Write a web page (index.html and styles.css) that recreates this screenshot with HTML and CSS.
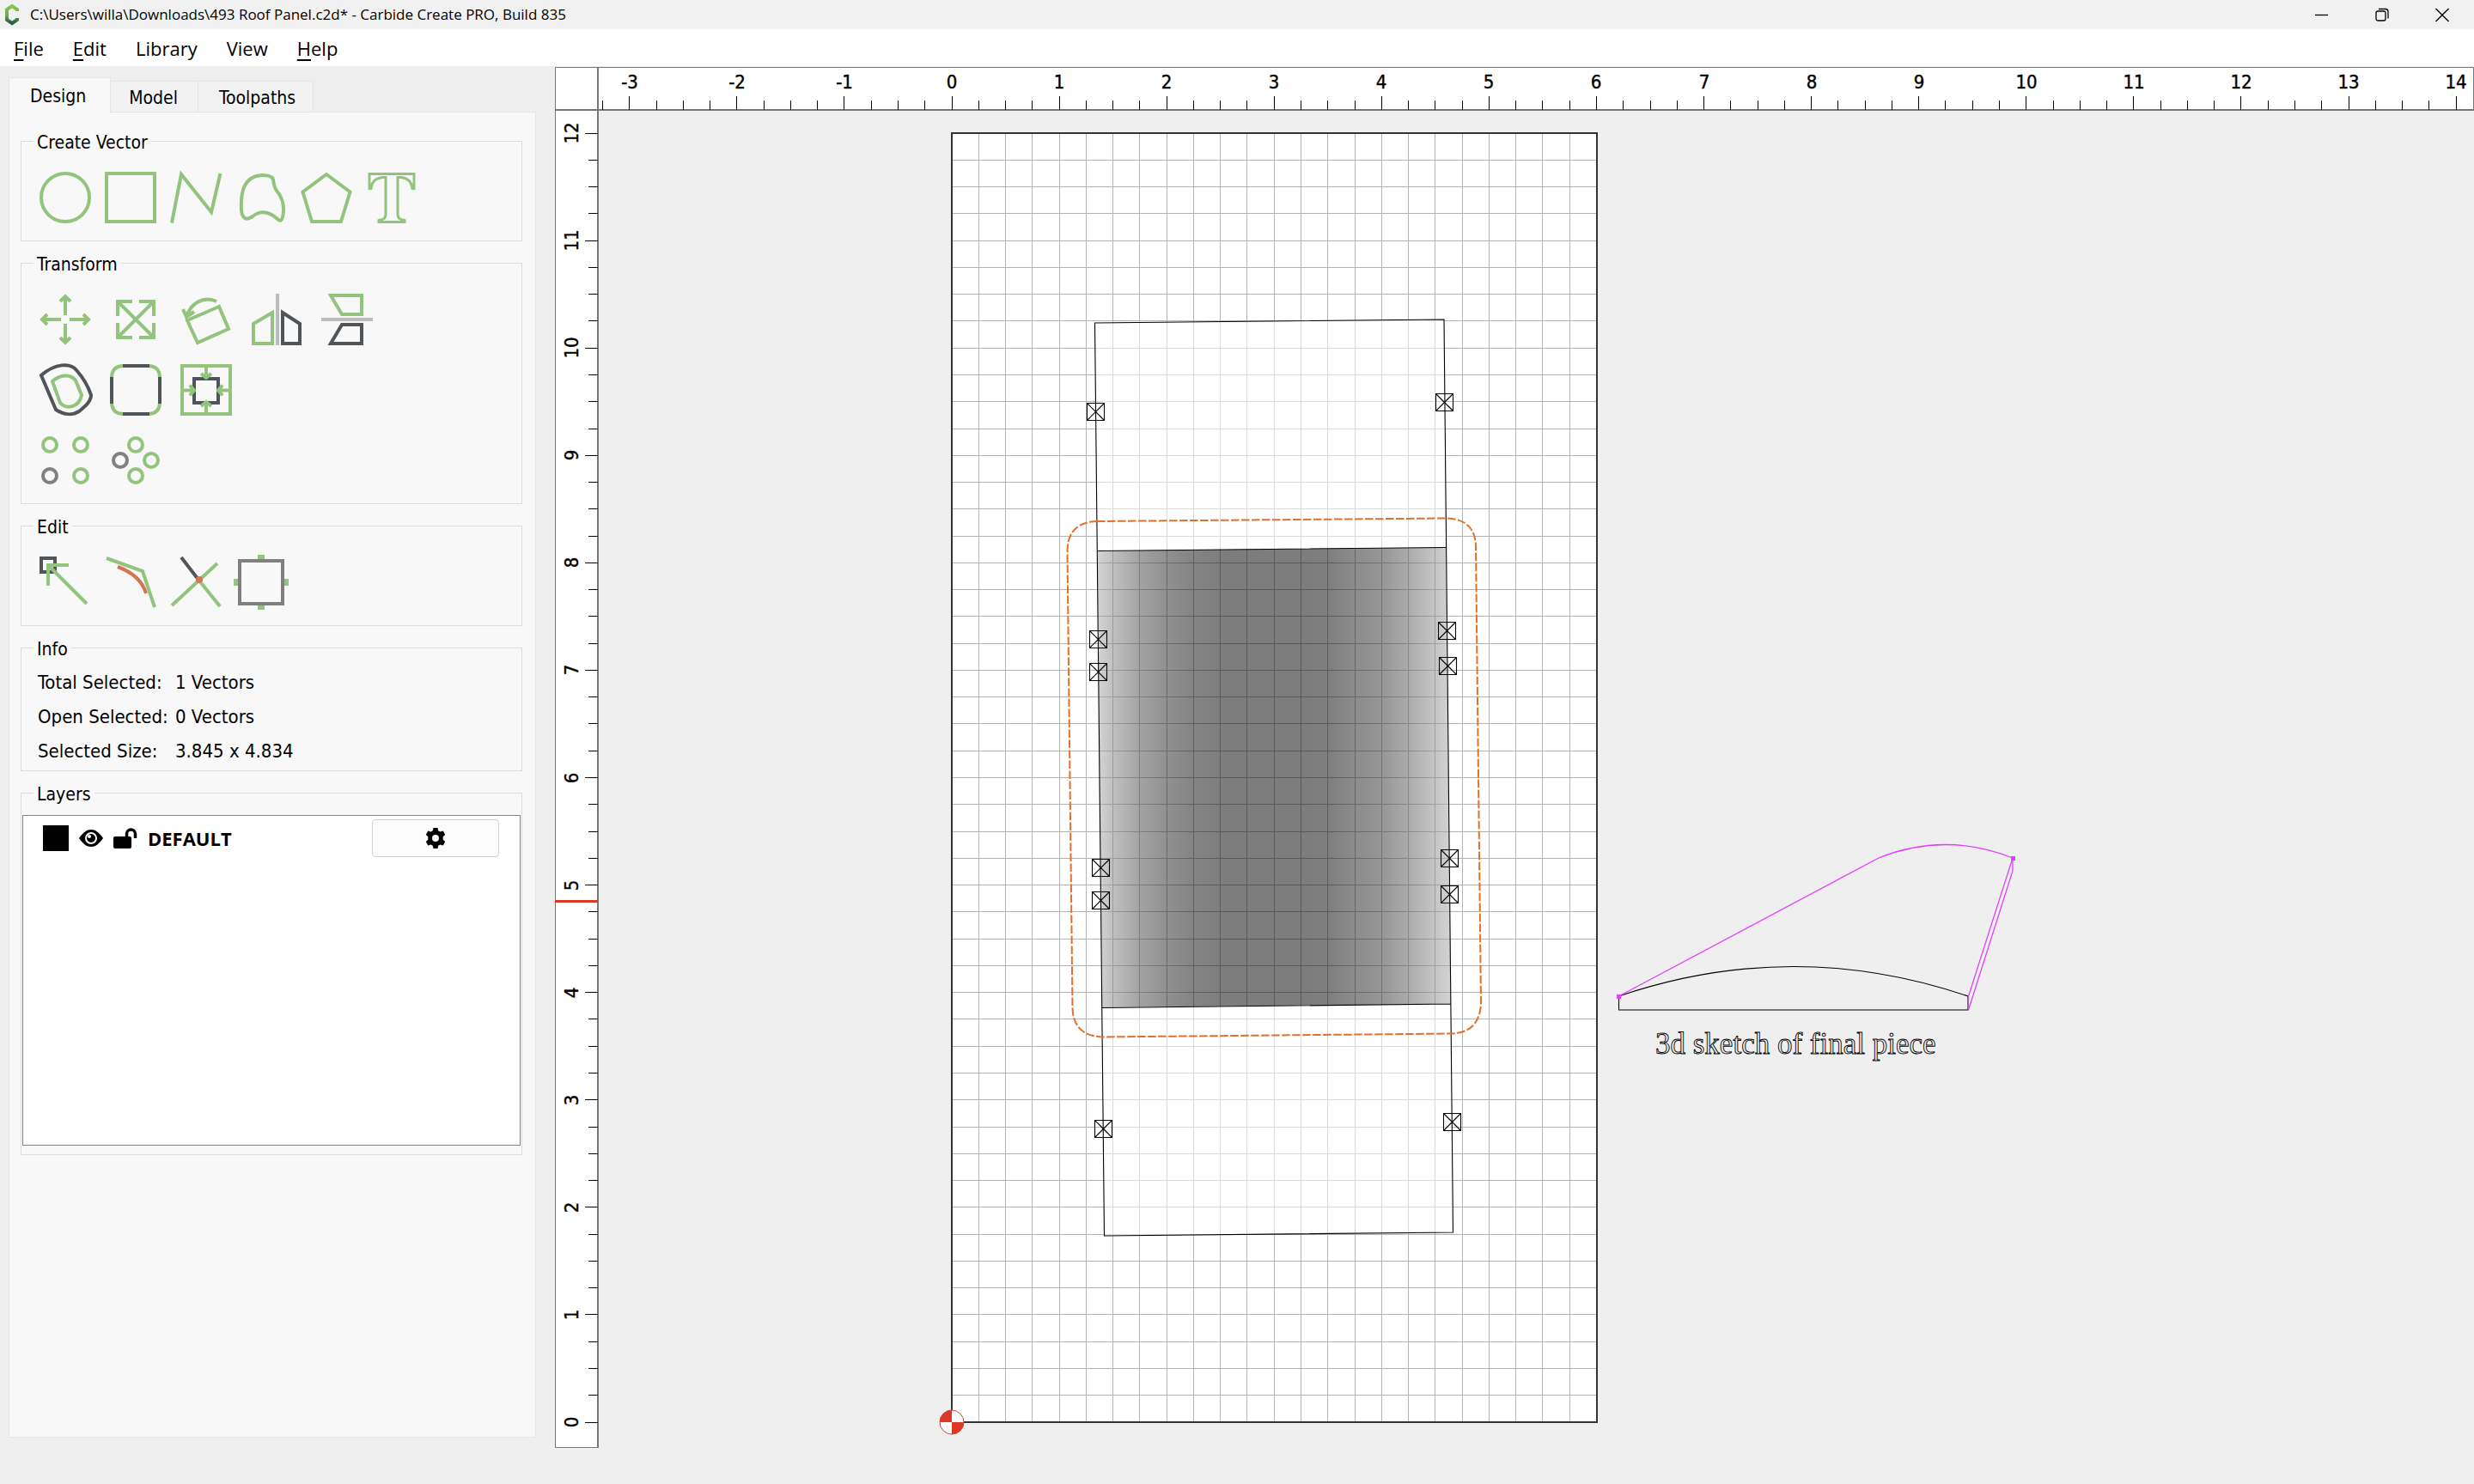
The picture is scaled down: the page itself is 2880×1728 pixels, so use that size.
FILE: index.html
```html
<!DOCTYPE html>
<html lang="en">
<head>
<meta charset="utf-8">
<title>Carbide Create PRO</title>
<link rel="stylesheet" href="styles.css">
</head>
<body>
<header class="titlebar">
  <svg class="logo" viewBox="0 0 18 26" aria-hidden="true">
    <defs><linearGradient id="logoFill" x1="0" y1="0" x2="0" y2="1"><stop offset="0" stop-color="#8cc652"/><stop offset="0.55" stop-color="#6aa84f"/><stop offset="1" stop-color="#1f5a4a"/></linearGradient></defs>
    <path d="M15 9V7L9 3 3 7v12l6 4 6-4v-2" fill="none" stroke="url(#logoFill)" stroke-width="4"/>
  </svg>
  <span class="title">C:\Users\willa\Downloads\493 Roof Panel.c2d* - Carbide Create PRO, Build 835</span>
  <div class="window-buttons">
    <button type="button" aria-label="Minimize"><svg viewBox="0 0 16 16"><path d="M0 8.5h15"/></svg></button>
    <button type="button" aria-label="Restore"><svg viewBox="0 0 16 16"><rect x="1" y="4" width="11" height="11" rx="2"/><path d="M4 1.5h8q3 0 3 3v8"/></svg></button>
    <button type="button" aria-label="Close"><svg viewBox="0 0 16 16"><path d="M.5 1l15 15M15.500 1l-15 15"/></svg></button>
  </div>
</header>
<nav class="menubar">
  <button type="button"><u>F</u>ile</button>
  <button type="button"><u>E</u>dit</button>
  <button type="button">Library</button>
  <button type="button">View</button>
  <button type="button"><u>H</u>elp</button>
</nav>
<main class="main">
  <aside class="sidebar">
    <div class="tabs" role="tablist">
      <button type="button" role="tab" class="tab tab-active" aria-selected="true">Design</button>
      <button type="button" role="tab" class="tab tab-model">Model</button>
      <button type="button" role="tab" class="tab tab-toolpaths">Toolpaths</button>
    </div>
    <div class="panel">
      <fieldset class="group">
        <legend>Create Vector</legend>
        <div class="tools tools-tight">
          <button type="button" aria-label="Circle"><svg viewBox="0 0 60 60"><circle class="g" cx="30" cy="30" r="28"/></svg></button>
          <button type="button" aria-label="Rectangle"><svg viewBox="0 0 60 60"><rect class="g" x="2" y="2" width="56" height="56"/></svg></button>
          <button type="button" aria-label="Polyline"><svg viewBox="0 0 60 60"><path class="g" d="M2 59.500 13 3l35 44L58.500 2"/></svg></button>
          <button type="button" aria-label="Curve"><svg viewBox="0 0 60 60"><path class="g" d="M31 4c7 0 12 1 13 5 1 5 0 9 7 17 5 8 6 18 4 27-1 4-3 5-6 2-10-9-20-10-29-3-7 5-12 3-13-7C6 25 9 5 31 4z"/></svg></button>
          <button type="button" aria-label="Polygon"><svg viewBox="0 0 60 60"><path class="g" d="M30 3 57.500 23.500 47 58H13L2.500 23.500z"/></svg></button>
          <button type="button" aria-label="Text"><svg viewBox="0 0 60 60"><path class="g thin" d="M4 2.500h52v17h-2c-1-8-5-12-13-13h-4v42c0 6 2 7 8 8v2H15v-2c6-1 8-2 8-8v-42h-4C11 8 7 11 6 19.500H4z"/></svg></button>
        </div>
      </fieldset>
      <fieldset class="group">
        <legend>Transform</legend>
        <div class="tools">
          <button type="button" aria-label="Move"><svg viewBox="0 0 60 60"><path class="g" d="M30 25V3M24 9l6-6 6 6M30 35v22M24 51l6 6 6-6M25 30H3M9 24l-6 6 6 6M35 30h22M51 24l6 6-6 6"/></svg></button>
          <button type="button" aria-label="Scale"><svg viewBox="0 0 60 60"><path class="g" d="M9 9l42 42M51 9 9 51M9 26V9h17M34 9h17v17M51 34v17H34M26 51H9V34"/></svg></button>
          <button type="button" aria-label="Rotate"><svg viewBox="0 0 60 60"><path class="g" d="M8 31 45 15l11 26-36 16zM42 9C27 2 12 11 7 27M3 18l4 9 9-6"/></svg></button>
          <button type="button" aria-label="Mirror horizontally"><svg viewBox="0 0 60 60"><path class="g" d="M3 35 25 22v36H3z"/><path class="k" d="M57 35 37 22v36h20z"/><path class="s" d="M31 0v60"/></svg></button>
          <button type="button" aria-label="Mirror vertically"><svg viewBox="0 0 60 60"><path class="g" d="M11 2h36v22H24z"/><path class="k" d="M11 58h36V36H24z"/><path class="s" d="M0 30h60"/></svg></button>
        </div>
        <div class="tools">
          <button type="button" aria-label="Offset"><svg viewBox="0 0 60 60"><path class="k" d="M2 13C18-1 36-2 43 7c7 8 14 20 17 29 0 8-8 14-14 19-8 5-18 4-27-2z"/><path class="g" d="M15 20c9-8 21-9 27-1l7 17c-3 15-18 17-25 9z"/></svg></button>
          <button type="button" aria-label="Fillet"><svg viewBox="0 0 60 60"><path class="g" d="M2 16Q2 2 16 2M44 2q14 0 14 14M58 44q0 14-14 14M16 58Q2 58 2 44"/><path class="k" d="M15 2h31M15 58h31M2 15v31M58 15v31"/></svg></button>
          <button type="button" aria-label="Align"><svg viewBox="0 0 60 60"><path class="k" d="M16 17h28v28H16z"/><path class="g" d="M2 2h56v56H2zM30 2v14M24 11l6 5 6-5M30 58V44M24 49l6-5 6 5M2 30.500h14M11 24.500l5 6-5 6M58 30.500H44M49 24.500l-5 6 5 6"/></svg></button>
        </div>
        <div class="tools">
          <button type="button" aria-label="Linear array"><svg viewBox="0 0 60 60"><circle class="g" cx="12" cy="12" r="8"/><circle class="g" cx="48" cy="12" r="8"/><circle class="d" cx="12" cy="48" r="8"/><circle class="g" cx="48" cy="48" r="8"/></svg></button>
          <button type="button" aria-label="Circular array"><svg viewBox="0 0 60 60"><circle class="g" cx="30" cy="12" r="8"/><circle class="g" cx="48" cy="30" r="8"/><circle class="d" cx="12" cy="30" r="8"/><circle class="g" cx="30" cy="48" r="8"/></svg></button>
        </div>
      </fieldset>
      <fieldset class="group">
        <legend>Edit</legend>
        <div class="tools tools-tight">
          <button type="button" aria-label="Node edit"><svg viewBox="0 0 60 60"><path class="k" d="M2 2h16v16H2z"/><path class="g" d="M10 34V10h24M10 10l45 45"/></svg></button>
          <button type="button" aria-label="Fillet corner"><svg viewBox="0 0 60 60"><path class="g" d="M2 2l42 15 14 42"/><path class="r" d="M15 12c19 7 29 17 33 31"/></svg></button>
          <button type="button" aria-label="Trim"><svg viewBox="0 0 60 60"><path class="k" d="M13 1l20 26"/><path class="g" d="M33 27l25 31M55 8 2 57"/><circle class="dot" cx="34" cy="27" r="4"/></svg></button>
          <button type="button" aria-label="Bounding box"><svg viewBox="0 0 60 60"><path class="gf" d="M26-2h8v7h-8zM26 55h8v7h-8zM-2 26h7v8h-7zM55 26h7v8h-7z"/><path class="d" d="M5 5h50v50H5z"/></svg></button>
        </div>
      </fieldset>
      <fieldset class="group">
        <legend>Info</legend>
        <dl class="info">
          <dt>Total Selected:</dt><dd>1 Vectors</dd>
          <dt>Open Selected:</dt><dd>0 Vectors</dd>
          <dt>Selected Size:</dt><dd>3.845 x 4.834</dd>
        </dl>
      </fieldset>
      <fieldset class="group group-layers">
        <legend>Layers</legend>
        <ul class="layers">
          <li class="layer">
            <span class="swatch"></span>
            <svg class="eye" viewBox="0 0 28 20" aria-hidden="true"><path d="M0 10C5 3 9 0 14 0s9 3 14 10c-5 7-9 10-14 10S5 17 0 10z"/><circle cx="14" cy="10" r="7" fill="#fff"/><circle cx="14" cy="10" r="5"/><circle cx="12" cy="8" r="2" fill="#fff"/></svg>
            <svg class="lock" viewBox="0 0 28 24" aria-hidden="true"><rect x="0" y="10" width="21" height="14" rx="2"/><path d="M15.500 11V7a5 5 0 0 1 10 0v5" fill="none" stroke="#000" stroke-width="3.500"/></svg>
            <span class="layer-name">DEFAULT</span>
            <button type="button" class="gear" aria-label="Layer settings"><svg viewBox="0 0 24 24"><path d="M9.500 0h5l.7 3.300 2.300 1.300 3.200-1 2.500 4.300-2.500 2.300v3.600l2.500 2.300-2.500 4.300-3.200-1-2.300 1.300-.7 3.300h-5l-.7-3.300-2.300-1.300-3.200 1L.8 16.100l2.500-2.300v-3.600L.8 7.900l2.500-4.300 3.200 1 2.300-1.300z"/><circle cx="12" cy="12" r="4" fill="#fcfcfc"/></svg></button>
          </li>
        </ul>
      </fieldset>
    </div>
  </aside>
  <section class="workspace">
    <svg class="canvas" viewBox="646 78 2234 1608" preserveAspectRatio="xMinYMin meet">
      <defs>
        <linearGradient id="relief" gradientUnits="userSpaceOnUse" x1="1279" y1="0" x2="1688" y2="0">
          <stop offset="0" stop-color="#a8a8a8"/><stop offset=".05" stop-color="#7b7b7b"/><stop offset=".12" stop-color="#484848"/><stop offset=".2" stop-color="#222"/><stop offset=".27" stop-color="#0d0d0d"/><stop offset=".36" stop-color="#000"/><stop offset=".6" stop-color="#000"/><stop offset=".67" stop-color="#080808"/><stop offset=".74" stop-color="#202020"/><stop offset=".82" stop-color="#383838"/><stop offset=".89" stop-color="#616161"/><stop offset="1" stop-color="#a8a8a8"/>
        </linearGradient>
      </defs>
      <rect class="stock" x="1108" y="155" width="751" height="1501"/>
      <path class="grid" id="grid"/>
      <path class="blank" d="M1274 376 1681 372 1692 1435 1286 1439zM1277.500 641.500 1683 637.500 1689 1169 1283 1173z"/>
      <path fill="url(#relief)" fill-opacity=".51" d="M1277.500 641.500 1683 637.500 1689 1169 1283 1173z"/>
      <rect class="stock-edge" x="1108" y="155" width="751" height="1501"/>
      <path class="vector" d="M1274.500 376 1681 372 1691.500 1435 1285.500 1439zM1277.500 641.500 1683 637.500M1283 1173.500 1689 1169"/>
      <path class="selection" d="M1277 607 1683 603.500Q1718 604 1718 637.500L1724 1169Q1722 1203 1689 1203.500L1283 1207.500Q1249 1206 1248.500 1173L1242.500 641.500Q1243 608 1277 607z"/>
      <g class="vector" id="markers"></g>
      <path class="vector" d="M1884.500 1160Q2088 1091 2291 1160V1176H1884.500z"/>
      <path class="sketch" d="M1884.500 1160 2187 999Q2264 968 2343 999V1014L2291.500 1176V1160L2343 999"/>
      <path class="handle" d="M1882 1158h5v5h-5zM2341 997h5v5h-5z"/>
      <text class="note" x="1927" y="1227">3d sketch of final piece</text>
      <circle cx="1108" cy="1656" r="14" fill="#fff"/>
      <path fill="#dc3826" d="M1108 1656V1642A14 14 0 0 0 1094 1656zM1108 1656V1670A14 14 0 0 0 1122 1656z"/>
      <circle cx="1108" cy="1656" r="14" fill="none" stroke="#dc3826"/>
      <path class="ruler" d="M646.500 78.500H2879.500V128H696V1685.500H646.500z"/>
      <path class="ruler-edge" d="M646 128H2880M696 78V1686"/>
      <path class="ticks" id="ticks"/>
      <g class="numbers" id="numbers"></g>
      <path stroke="#dc3826" stroke-width="3" d="M646 1049.500H696"/>
    </svg>
  </section>
</main>
<footer class="statusbar"></footer>
<script src="canvas.js"></script>
</body>
</html>
```
FILE: styles.css
```css
* { box-sizing: border-box; }
body {
  margin: 0;
  min-height: 100vh;
  display: flex;
  flex-direction: column;
  background: #efefef;
  color: #000;
  font: 21px/26px "DejaVu Sans Condensed", "DejaVu Sans", sans-serif;
}
button { border: 0; padding: 0; margin: 0; background: none; color: inherit; font: inherit; }
svg { display: block; }

.titlebar { display: flex; align-items: center; height: 34px; padding: 0 2px 0 5px; background: #f1f1f1; font: 17px/24px "Open Sans", sans-serif; }
.logo { width: 18px; height: 26px; margin-right: 12px; }
.title { flex: 1; white-space: nowrap; }
.window-buttons { display: flex; }
.window-buttons button { width: 70px; height: 34px; display: grid; place-items: center; }
.window-buttons svg { width: 16px; height: 16px; fill: none; stroke: #000; stroke-width: 1.3; overflow: visible; }

.menubar { display: flex; gap: 34px; height: 44px; padding: 0 16px; background: #fff; border-bottom: 1px solid #efefef; font: 22px/44px "Open Sans", sans-serif; }
.menubar u { text-underline-offset: 4px; }

.main { flex: 1; display: flex; min-height: 0; }
.sidebar { flex: none; width: 646px; padding: 12px 22px 12px 10px; display: flex; flex-direction: column; }
.tabs { display: flex; align-items: flex-end; }
.tab { height: 36px; padding: 2px 23px 0 21px; border: 1px solid #e5e5e5; border-width: 1px 1px 0 0; background: #f2f2f2; }
.tab-active { height: 41px; margin-bottom: -1px; padding: 2px 28px 0 24px; border-left-width: 1px; background: #f8f8f8; position: relative; }
.tab-toolpaths { padding: 2px 20px 0 24px; }
.panel { flex: 1; padding: 18px 15px 20px 13px; border: 1px solid #e5e5e5; background: #f8f8f8; display: flex; flex-direction: column; gap: 10px; }
.group { margin: 0; min-width: 0; padding: 0 19px; border: 1px solid #dcdcdc; }
.group legend { margin-left: -5px; padding: 4px 4px 0; }
.tools { display: flex; gap: 22px; padding: 21px 2px 0; }
.tools:last-child { padding-bottom: 20px; }
.tools + .tools { padding-top: 22px; }
.tools-tight { gap: 16px; }
.tools button, .tools svg { width: 60px; height: 60px; overflow: visible; }
.g, .k, .s, .d, .r { fill: none; stroke-width: 4; }
.g { stroke: #93c47d; }
.k { stroke: #50555a; }
.s { stroke: #bcbcbc; }
.d { stroke: #808080; }
.r { stroke: #d37453; }
.thin { stroke-width: 3; }
.dot { fill: #d37453; }
.gf { fill: #93c47d; }
.info { display: grid; grid-template-columns: 160px 1fr; margin: 0; padding: 6px 0 2px; font-size: 22px; line-height: 40px; }
.info dd { margin: 0; }
.group-layers { padding: 0 1px; }
.group-layers legend { margin-left: 13px; }
.layers { list-style: none; margin: 11px 0 10px; padding: 4px 24px 4px 23px; height: 385px; border: 1px solid #828790; background: #fff; }
.layer { display: flex; align-items: center; height: 44px; }
.swatch { width: 30px; height: 30px; margin-right: 12px; background: #000; }
.eye { width: 28px; height: 20px; margin-right: 12px; }
.lock { width: 28px; height: 24px; margin-right: 12px; }
.layer-name { flex: 1; font: bold 22px/30px "Open Sans", sans-serif; }
.gear { width: 148px; height: 44px; border: 1px solid #d0d0d0; border-radius: 4px; background: #fcfcfc; display: grid; place-items: center; }
.gear svg { width: 24px; height: 24px; }

.workspace { flex: 1; min-width: 0; }
.canvas { width: 100%; height: 100%; }
.stock { fill: #fff; }
.stock-edge { fill: none; stroke: #333; stroke-width: 2; }
.grid { fill: none; stroke: #b4b4b4; }
.blank { fill: #fff; fill-opacity: .5; fill-rule: evenodd; }
.vector { fill: none; stroke: #000; stroke-width: 1.1; }
.selection { fill: none; stroke: #e0702c; stroke-width: 2; stroke-dasharray: 9.500 2.500; }
.sketch { fill: none; stroke: #e040fb; stroke-width: 1.3; }
.handle { fill: #e040fb; }
.note { font: 35px "Liberation Serif", serif; fill: none; stroke: #000; stroke-width: .9; }
.ruler { fill: #fff; stroke: #777; }
.ruler-edge { fill: none; stroke: #777; stroke-width: 2; }
.ticks { stroke: #000; }
.numbers { font: 22px "DejaVu Sans Condensed", "DejaVu Sans", sans-serif; text-anchor: middle; fill: #000; stroke: #000; stroke-width: .4; }
.statusbar { height: 42px; }
```
FILE: canvas.js
```js
// Rulers, grid and inlay markers of the drawing area.
const NS = "http://www.w3.org/2000/svg";
const ORIGIN = { x: 1108, y: 1656 };
const INCH = 125.08;
const px = v => Math.floor(v) + 0.5;

let grid = "";
for (let i = 1; i < 24; i++) grid += `M${px(ORIGIN.x + i * INCH / 4)} 155V1656`;
for (let i = 1; i < 48; i++) grid += `M1108 ${px(ORIGIN.y - i * INCH / 4)}H1859`;
document.getElementById("grid").setAttribute("d", grid);

const numbers = document.getElementById("numbers");
function label(text, transform) {
  const t = document.createElementNS(NS, "text");
  t.textContent = text;
  t.setAttribute("transform", transform);
  numbers.append(t);
}

let ticks = "";
for (let i = -13; i <= 56; i++) {
  const x = ORIGIN.x + i * INCH / 4;
  ticks += `M${px(x)} 128v${i % 4 ? -11 : -16}`;
  if (i % 4 === 0) label(i / 4, `translate(${Math.round(x)} 103)`);
}
for (let i = 0; i <= 48; i++) {
  const y = ORIGIN.y - i * INCH / 4;
  ticks += `M696 ${px(y)}h${i % 4 ? -11 : -15}`;
  if (i % 4 === 0) label(i / 4, `translate(673 ${Math.round(y)}) rotate(-90)`);
}
document.getElementById("ticks").setAttribute("d", ticks);

const markers = [
  [1275, 479], [1681, 468], [1278, 744], [1684, 734], [1278, 782], [1685, 775],
  [1281, 1010], [1687, 999], [1281, 1048], [1687, 1041], [1284, 1314], [1690, 1306]
];
for (const [x, y] of markers) {
  const p = document.createElementNS(NS, "path");
  p.setAttribute("d", `M${x - 9.5} ${y - 9.5}h20v20h-20zl20 20m0-20l-20 20`);
  document.getElementById("markers").append(p);
}
```
